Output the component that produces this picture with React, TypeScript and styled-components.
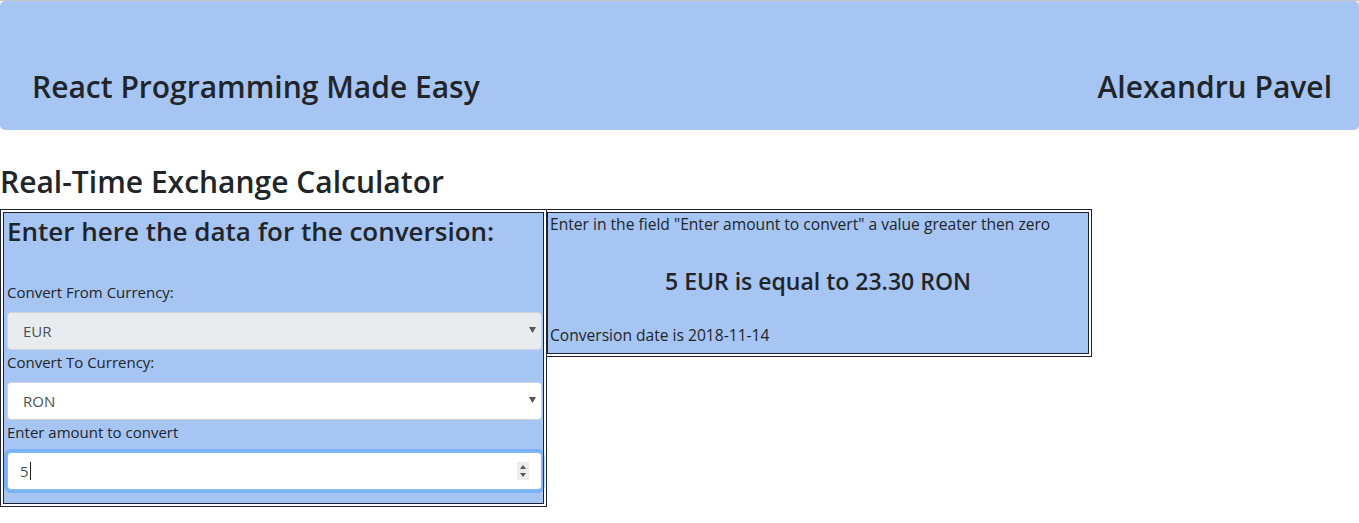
import React from "react";
import styled, { createGlobalStyle } from "styled-components";

const GlobalStyle = createGlobalStyle`
  html, body { margin: 0; padding: 0; background: #ffffff; }
  body {
    font-family: "Open Sans", "Noto Sans", sans-serif;
    color: #212529;
    border-top: 1px solid #c6c6c6;
  }
  * { box-sizing: border-box; }
`;

const BLUE = "#a6c5f2";

const Header = styled.header`
  height: 129px;
  background: ${BLUE};
  border-radius: 5px;
  display: flex;
  justify-content: space-between;
  align-items: flex-end;
  padding: 0 27px 25px 32px;
`;

const HeaderText = styled.div`
  font-size: 30px;
  font-weight: 600;
  line-height: 36px;
`;

const PageTitle = styled.h2`
  margin: 33px 0 8px 0;
  padding-left: 0;
  font-size: 30px;
  font-weight: 600;
  line-height: 38px;
`;

const Board = styled.div`
  display: flex;
  align-items: flex-start;
`;

const Frame = styled.div<{ $first?: boolean }>`
  border: 1px solid #1e2235;
  border-left-width: ${(p) => (p.$first ? "1px" : "0")};
  padding: ${(p) => (p.$first ? "2px" : "2px 2px 2px 0")};
`;

const Cell = styled.div<{ $w: number }>`
  width: ${(p) => p.$w}px;
  border: 1px solid #1e2235;
  background: ${BLUE};
`;

const FormCell = styled(Cell)`
  padding: 1px 1px 13px 3px;
`;

const InfoCell = styled(Cell)`
  padding: 1px 1px 8px 1px;
`;

const FormHeading = styled.h4`
  margin: 3px 0 34px 0;
  font-size: 26px;
  font-weight: 600;
  line-height: 29px;
`;

const Label = styled.label`
  display: block;
  font-size: 15px;
  line-height: 24px;
  margin-bottom: 8px;
`;

const SelectWrap = styled.div`
  position: relative;
  height: 38px;
`;

const Select = styled.select<{ $disabled?: boolean }>`
  appearance: none;
  -webkit-appearance: none;
  width: 100%;
  height: 38px;
  border: 1px solid #ced4da;
  border-radius: 4px;
  background: ${(p) => (p.$disabled ? "#e9ecef" : "#ffffff")};
  color: #495057;
  font-family: inherit;
  font-size: 15px;
  padding: 0 14px 0 15px;
  opacity: 1;
  outline: none;
`;

const Arrow = styled.svg`
  position: absolute;
  right: 6px;
  top: 15px;
  pointer-events: none;
`;

const Field = styled.div`
  height: 38px;
  border: 1px solid #80bdff;
  border-radius: 4px;
  background: #ffffff;
  box-shadow: 0 0 0 3px rgba(0, 123, 255, 0.25);
  display: flex;
  align-items: center;
  padding: 0 12px 0 12px;
  font-size: 15px;
  color: #495057;
`;

const FieldValue = styled.span`
  flex: 1;
  display: flex;
  align-items: center;
`;

const Caret = styled.span`
  display: inline-block;
  width: 1px;
  height: 18px;
  background: #222;
  margin-left: 1px;
`;

const Spinner = styled.svg`
  background: #ececec;
  flex: none;
`;

const InfoLine = styled.h6`
  margin: 1px 0 0 1px;
  font-size: 15.6px;
  font-weight: 400;
  line-height: 19px;
`;

const Result = styled.h4`
  margin: 33px 0 30px 0;
  text-align: center;
  font-size: 23px;
  font-weight: 600;
  line-height: 29px;
`;

const DownArrow = () => (
  <Arrow width="7" height="6" viewBox="0 0 7 6">
    <path d="M0 0 L7 0 L3.5 6 Z" fill="#555" />
  </Arrow>
);

export default function App() {
  return (
    <>
      <GlobalStyle />
      <Header>
        <HeaderText>React Programming Made Easy</HeaderText>
        <HeaderText>Alexandru Pavel</HeaderText>
      </Header>
      <PageTitle>Real-Time Exchange Calculator</PageTitle>
      <Board>
        <Frame $first>
          <FormCell $w={541}>
            <FormHeading>Enter here the data for the conversion:</FormHeading>
            <Label>Convert From Currency:</Label>
            <SelectWrap>
              <Select $disabled disabled defaultValue="EUR">
                <option>EUR</option>
              </Select>
              <DownArrow />
            </SelectWrap>
            <Label>Convert To Currency:</Label>
            <SelectWrap>
              <Select defaultValue="RON">
                <option>RON</option>
              </Select>
              <DownArrow />
            </SelectWrap>
            <Label>Enter amount to convert</Label>
            <Field>
              <FieldValue>
                5<Caret />
              </FieldValue>
              <Spinner width="12" height="18" viewBox="0 0 12 18">
                <path d="M3 7 L9 7 L6 3 Z" fill="#555" />
                <path d="M3 11 L9 11 L6 15 Z" fill="#555" />
              </Spinner>
            </Field>
          </FormCell>
        </Frame>
        <Frame>
          <InfoCell $w={542}>
            <InfoLine>Enter in the field "Enter amount to convert" a value greater then zero</InfoLine>
            <Result>5 EUR is equal to 23.30 RON</Result>
            <InfoLine>Conversion date is 2018-11-14</InfoLine>
          </InfoCell>
        </Frame>
      </Board>
    </>
  );
}
